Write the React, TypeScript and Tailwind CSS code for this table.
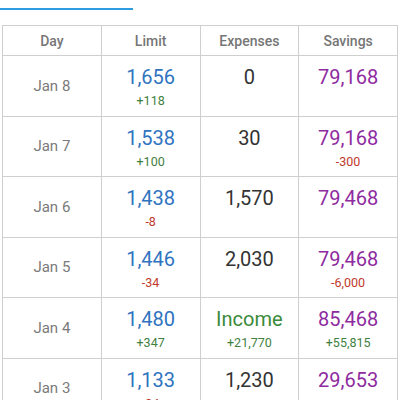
import React from "react";

type Row = {
  day: string;
  limit: string;
  limitDelta: string;
  limitPos: boolean;
  exp: string;
  expIncome?: boolean;
  expSub?: string;
  sav: string;
  savSub?: string;
  savPos?: boolean;
};

const rows: Row[] = [
  { day: "Jan 8", limit: "1,656", limitDelta: "+118", limitPos: true, exp: "0", sav: "79,168" },
  { day: "Jan 7", limit: "1,538", limitDelta: "+100", limitPos: true, exp: "30", sav: "79,168", savSub: "-300", savPos: false },
  { day: "Jan 6", limit: "1,438", limitDelta: "-8", limitPos: false, exp: "1,570", sav: "79,468" },
  { day: "Jan 5", limit: "1,446", limitDelta: "-34", limitPos: false, exp: "2,030", sav: "79,468", savSub: "-6,000", savPos: false },
  { day: "Jan 4", limit: "1,480", limitDelta: "+347", limitPos: true, exp: "Income", expIncome: true, expSub: "+21,770", sav: "85,468", savSub: "+55,815", savPos: true },
  { day: "Jan 3", limit: "1,133", limitDelta: "-34", limitPos: false, exp: "1,230", sav: "29,653" },
];

const cell = "border-r border-[#cfcfcf] flex flex-col items-center";

export default function App() {
  return (
    <div className="w-[400px] h-[400px] bg-white overflow-hidden" style={{ fontFamily: "Roboto, 'Noto Sans', sans-serif" }}>
      <div className="h-[25px] pt-[8px]">
        <div className="w-[133px] h-[2px] bg-[#2f9be0]" />
      </div>
      <div className="ml-[2px] w-[396px] border-t border-l border-[#cfcfcf]">
        <div className="grid grid-cols-4 h-[30px] border-b border-[#cfcfcf] text-[14px] font-medium text-[#767676]">
          {["Day", "Limit", "Expenses", "Savings"].map((h) => (
            <div key={h} className="border-r border-[#cfcfcf] flex items-center justify-center pt-[2px]">{h}</div>
          ))}
        </div>
        {rows.map((r) => (
          <div key={r.day} className="grid grid-cols-4 h-[60.5px] border-b border-[#cfcfcf]">
            <div className="border-r border-[#cfcfcf] flex items-center justify-center text-[15px] text-[#7a7a7a]">{r.day}</div>
            <div className={cell + " pt-[9px]"}>
              <div className="text-[20px] leading-[24px] text-[#3074bf]">{r.limit}</div>
              <div className={"text-[12.5px] leading-[16px] mt-[4px] " + (r.limitPos ? "text-[#3f7f3f]" : "text-[#c0392b]")}>{r.limitDelta}</div>
            </div>
            <div className={cell + " pt-[9px]"}>
              <div className={"text-[20px] leading-[24px] " + (r.expIncome ? "text-[#3a8a3a]" : "text-[#333333]")}>{r.exp}</div>
              {r.expSub && <div className="text-[12.5px] leading-[16px] mt-[4px] text-[#3f7f3f]">{r.expSub}</div>}
            </div>
            <div className={cell + " pt-[9px]"}>
              <div className="text-[20px] leading-[24px] text-[#8e2ba0]">{r.sav}</div>
              {r.savSub && <div className={"text-[12.5px] leading-[16px] mt-[4px] " + (r.savPos ? "text-[#3f7f3f]" : "text-[#c0392b]")}>{r.savSub}</div>}
            </div>
          </div>
        ))}
      </div>
    </div>
  );
}
